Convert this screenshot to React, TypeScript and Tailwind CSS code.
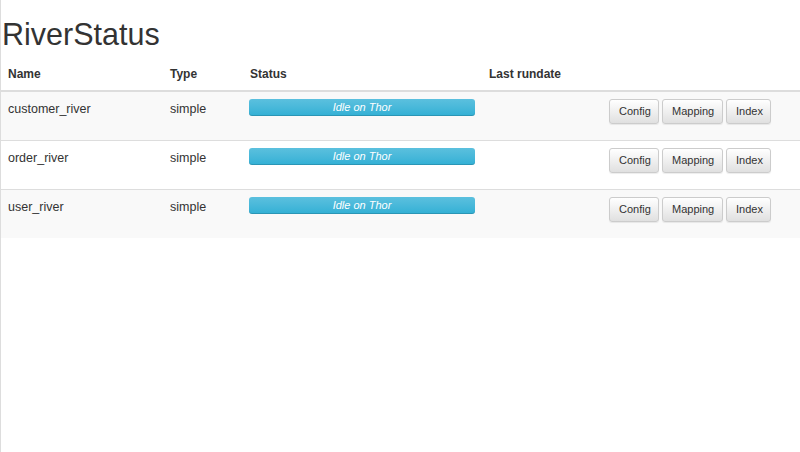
import React from 'react';

type River = { name: string; type: string; status: string; lastRun: string };

const rivers: River[] = [
  { name: 'customer_river', type: 'simple', status: 'Idle on Thor', lastRun: '' },
  { name: 'order_river', type: 'simple', status: 'Idle on Thor', lastRun: '' },
  { name: 'user_river', type: 'simple', status: 'Idle on Thor', lastRun: '' },
];

const btn =
  'h-[25px] px-[9px] text-[11px] leading-none text-[#333] border border-[#ccc] rounded-[3px] bg-gradient-to-b from-white to-[#e0e0e0] shadow-[inset_0_1px_0_rgba(255,255,255,0.15),0_1px_1px_rgba(0,0,0,0.075)]';

const App: React.FC = () => {
  return (
    <div className="min-h-[452px] border-l border-[#ddd] bg-white text-[#333] font-['Liberation_Sans',Arial,sans-serif] text-[12px]">
      <h1 className="pt-[13px] pl-[1px] text-[30.5px] leading-[43px] font-normal">RiverStatus</h1>
      <table className="w-full border-collapse mt-[1px]">
        <thead>
          <tr className="border-b-2 border-[#ddd] text-left">
            <th className="w-[161px] px-[7px] pt-[8px] pb-[7px] font-bold">Name</th>
            <th className="w-[80px] px-[8px] pt-[8px] pb-[7px] font-bold">Type</th>
            <th className="w-[239px] px-[8px] pt-[8px] pb-[7px] font-bold">Status</th>
            <th className="w-[120px] px-[8px] pt-[8px] pb-[7px] font-bold">Last rundate</th>
            <th className="pt-[8px] pb-[7px]"></th>
          </tr>
        </thead>
        <tbody>
          {rivers.map((r, i) => (
            <tr key={r.name} className={`h-[49px] border-b border-[#ddd] last:border-b-0 align-top ${i % 2 === 0 ? 'bg-[#f9f9f9]' : 'bg-white'}`}>
              <td className="px-[7px] pt-[8px] text-[12.5px]">{r.name}</td>
              <td className="px-[8px] pt-[8px] text-[12.5px]">{r.type}</td>
              <td className="pl-[7px] pr-[6px] pt-[7px]">
                <div className="h-[17px] rounded-[3px] bg-gradient-to-b from-[#5bc0de] to-[#31b0d5] shadow-[inset_0_-1px_0_rgba(0,0,0,0.15)] text-white italic text-[11px] leading-[17px] text-center">
                  {r.status}
                </div>
              </td>
              <td className="px-[8px] pt-[8px]">{r.lastRun}</td>
              <td className="pl-[8px] pt-[7px] pb-[8px]">
                <div className="flex gap-[3px]">
                  <button className={`${btn} w-[50px]`}>Config</button>
                  <button className={`${btn} w-[61px]`}>Mapping</button>
                  <button className={`${btn} w-[45px]`}>Index</button>
                </div>
              </td>
            </tr>
          ))}
        </tbody>
      </table>
    </div>
  );
};

export default App;
